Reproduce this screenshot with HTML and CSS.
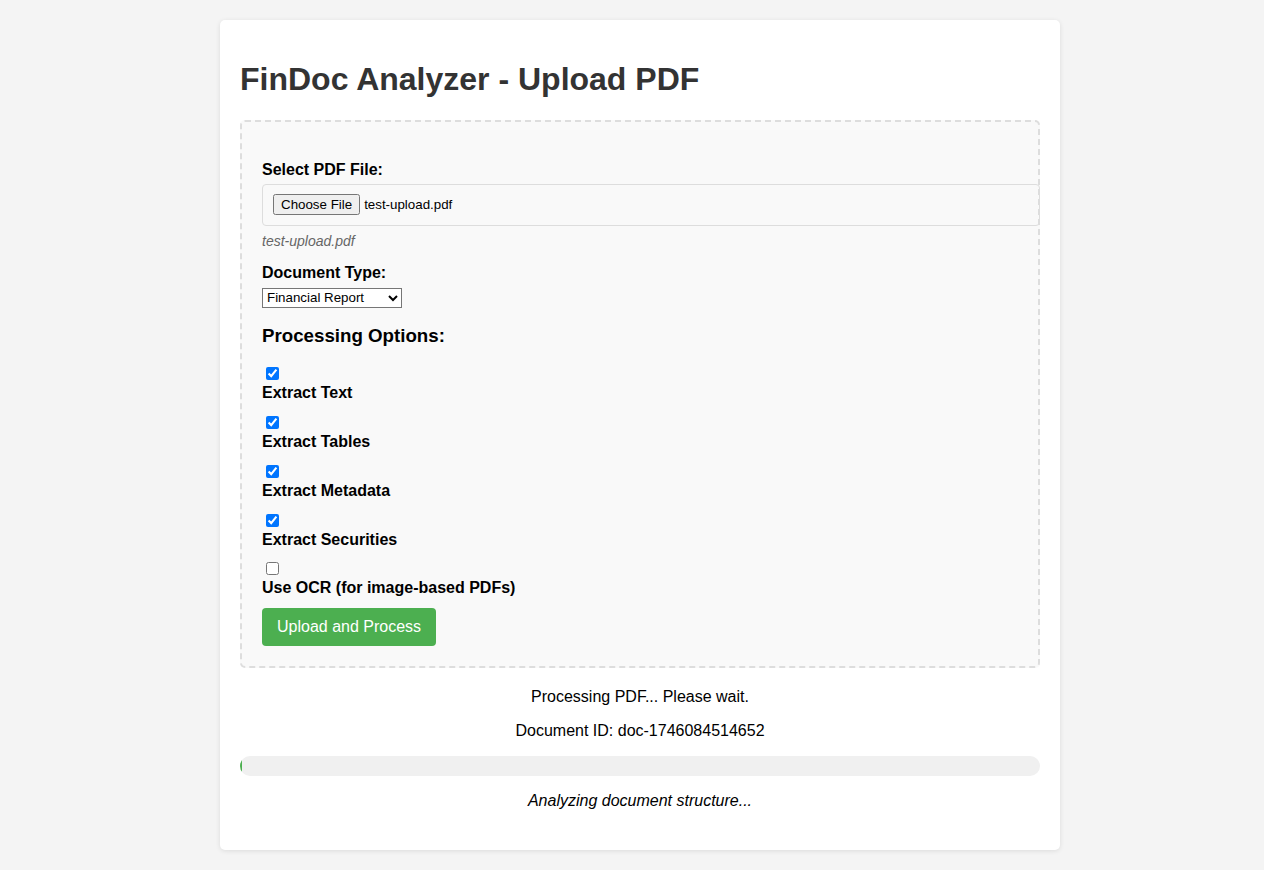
FILE: index.html
```html
<!DOCTYPE html>
<html lang="en">
<head>
<meta charset="utf-8">
<title>FinDoc Analyzer - Upload PDF</title>
<link rel="stylesheet" href="styles.css">
</head>
<body>
<div class="container">
  <h1>FinDoc Analyzer - Upload PDF</h1>
  <form class="upload-area">
    <div class="form-group first">
      <label for="pdf">Select PDF File:</label>
      <div class="file-input"><button type="button" id="pdf" class="file-btn">Choose File</button><span class="file-chosen">test-upload.pdf</span></div>
      <div class="file-name">test-upload.pdf</div>
    </div>
    <div class="form-group">
      <label for="doctype">Document Type:</label>
      <select id="doctype" class="doc-select">
        <option>Financial Report</option>
        <option>Portfolio Statement</option>
        <option>Annual Report</option>
        <option>Other</option>
      </select>
    </div>
    <h3>Processing Options:</h3>
    <div class="option">
      <input type="checkbox" id="o1" checked>
      <label for="o1">Extract Text</label>
    </div>
    <div class="option">
      <input type="checkbox" id="o2" checked>
      <label for="o2">Extract Tables</label>
    </div>
    <div class="option">
      <input type="checkbox" id="o3" checked>
      <label for="o3">Extract Metadata</label>
    </div>
    <div class="option">
      <input type="checkbox" id="o4" checked>
      <label for="o4">Extract Securities</label>
    </div>
    <div class="option">
      <input type="checkbox" id="o5">
      <label for="o5">Use OCR (for image-based PDFs)</label>
    </div>
    <button type="button" class="btn">Upload and Process</button>
  </form>
  <div class="status">
    <p>Processing PDF... Please wait.</p>
    <p>Document ID: doc-1746084514652</p>
    <div class="progress"><div class="progress-fill" style="width: 0.3%"></div></div>
    <p class="stage">Analyzing document structure...</p>
  </div>
</div>
</body>
</html>
```
FILE: styles.css
```css
body {
  margin: 0;
  padding: 20px 20px 20px 36px;
  background: #f4f4f4;
  font-family: "Liberation Sans", Arial, sans-serif;
  color: #000;
}

.container {
  max-width: 800px;
  margin: 0 auto;
  padding: 20px;
  background: #fff;
  border-radius: 5px;
  box-shadow: 0 1px 5px rgba(0, 0, 0, 0.1);
}

h1 {
  color: #333;
}

.upload-area {
  border: 2px dashed #ddd;
  border-radius: 5px;
  background: #f9f9f9;
  padding: 20px;
}

.form-group {
  margin-bottom: 15px;
}

.form-group.first {
  padding-top: 19px;
}

label {
  display: block;
  margin-bottom: 5px;
  font-weight: bold;
}

.file-input {
  display: flex;
  align-items: center;
  width: 100%;
  height: 20px;
  padding: 10px;
  border: 1px solid #ddd;
  border-radius: 4px;
  font-size: 13.333px;
}

.file-btn {
  margin: 0 4px 0 0;
  font-family: "Liberation Sans", Arial, sans-serif;
  font-size: 13.333px;
}

.file-chosen {
  white-space: nowrap;
}

.file-name {
  margin-top: 7px;
  font-size: 14px;
  font-style: italic;
  color: #666;
}

.doc-select {
  width: 140px;
  height: 20px;
  margin-top: 1px;
  border: 1px solid #767676;
  border-radius: 0;
  background: #fff;
  font-family: "Liberation Sans", Arial, sans-serif;
  font-size: 13.333px;
}

h3 {
  margin: 17px 0 17.5px;
}

.option {
  margin-bottom: 10.75px;
}

.btn {
  background: #4caf50;
  color: #fff;
  border: none;
  border-radius: 4px;
  padding: 10px 15px;
  font-size: 16px;
  font-family: "Liberation Sans", Arial, sans-serif;
}

.status {
  margin: 20px 0;
  text-align: center;
}

.progress {
  height: 20px;
  background: #f0f0f0;
  border-radius: 10px;
  overflow: hidden;
}

.progress-fill {
  height: 100%;
  background: #4caf50;
}

.stage {
  font-style: italic;
}
```
